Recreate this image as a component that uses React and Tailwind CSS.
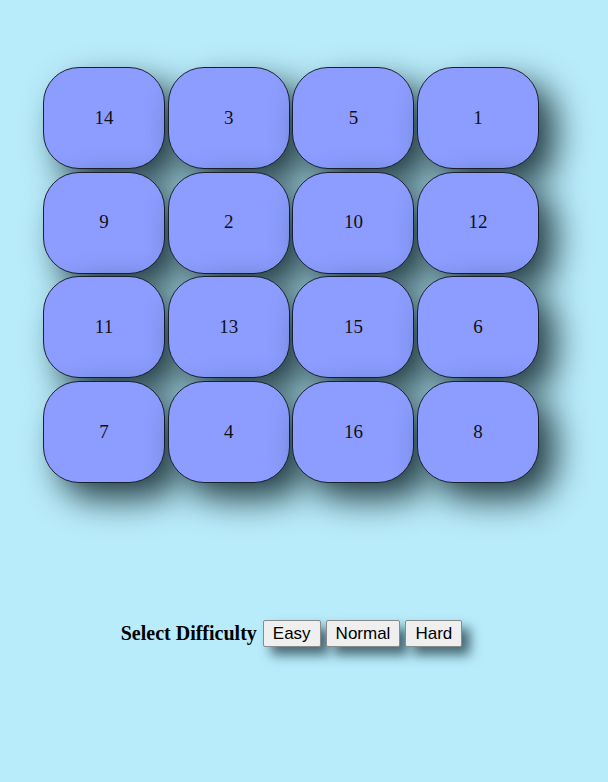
import React, { useState } from 'react';

const START = [14, 3, 5, 1, 9, 2, 10, 12, 11, 13, 15, 6, 7, 4, 16, 8];

const App = () => {
  // Orden de las fichas
  const [tiles] = useState(START);

  return (
    <div className="min-h-screen w-full bg-[#b9ecfb] pt-[67px] pl-[43px]">
      {/* Tablero */}
      <div className="grid w-[496px] grid-cols-[repeat(4,122px)] gap-x-[2.7px] gap-y-[2.7px]">
        {tiles.map((n) => (
          <div
            key={n}
            className="flex h-[102px] w-[122px] items-center justify-center rounded-[36px] border border-[#1b2030] bg-[#8c9dff] text-[19px] text-[#111] shadow-[16px_16px_34px_rgba(10,30,35,0.85)] font-['Liberation_Serif',serif]"
          >
            {n}
          </div>
        ))}
      </div>

      {/* Dificultad */}
      <div className="mt-[135px] flex w-[496px] items-center justify-center pl-[6px]">
        <span className="mr-[6px] text-[20px] font-bold text-black font-['Liberation_Serif',serif]">
          Select Difficulty
        </span>
        {['Easy', 'Normal', 'Hard'].map((d) => (
          <button
            key={d}
            className="mr-[5px] h-[27px] rounded-[2px] border border-[#8a8a8a] bg-[#efefef] px-[9px] text-[17px] text-black shadow-[8px_8px_12px_rgba(30,60,70,0.75)] font-['Liberation_Sans',Arial,sans-serif]"
          >
            {d}
          </button>
        ))}
      </div>
    </div>
  );
};

export default App;
